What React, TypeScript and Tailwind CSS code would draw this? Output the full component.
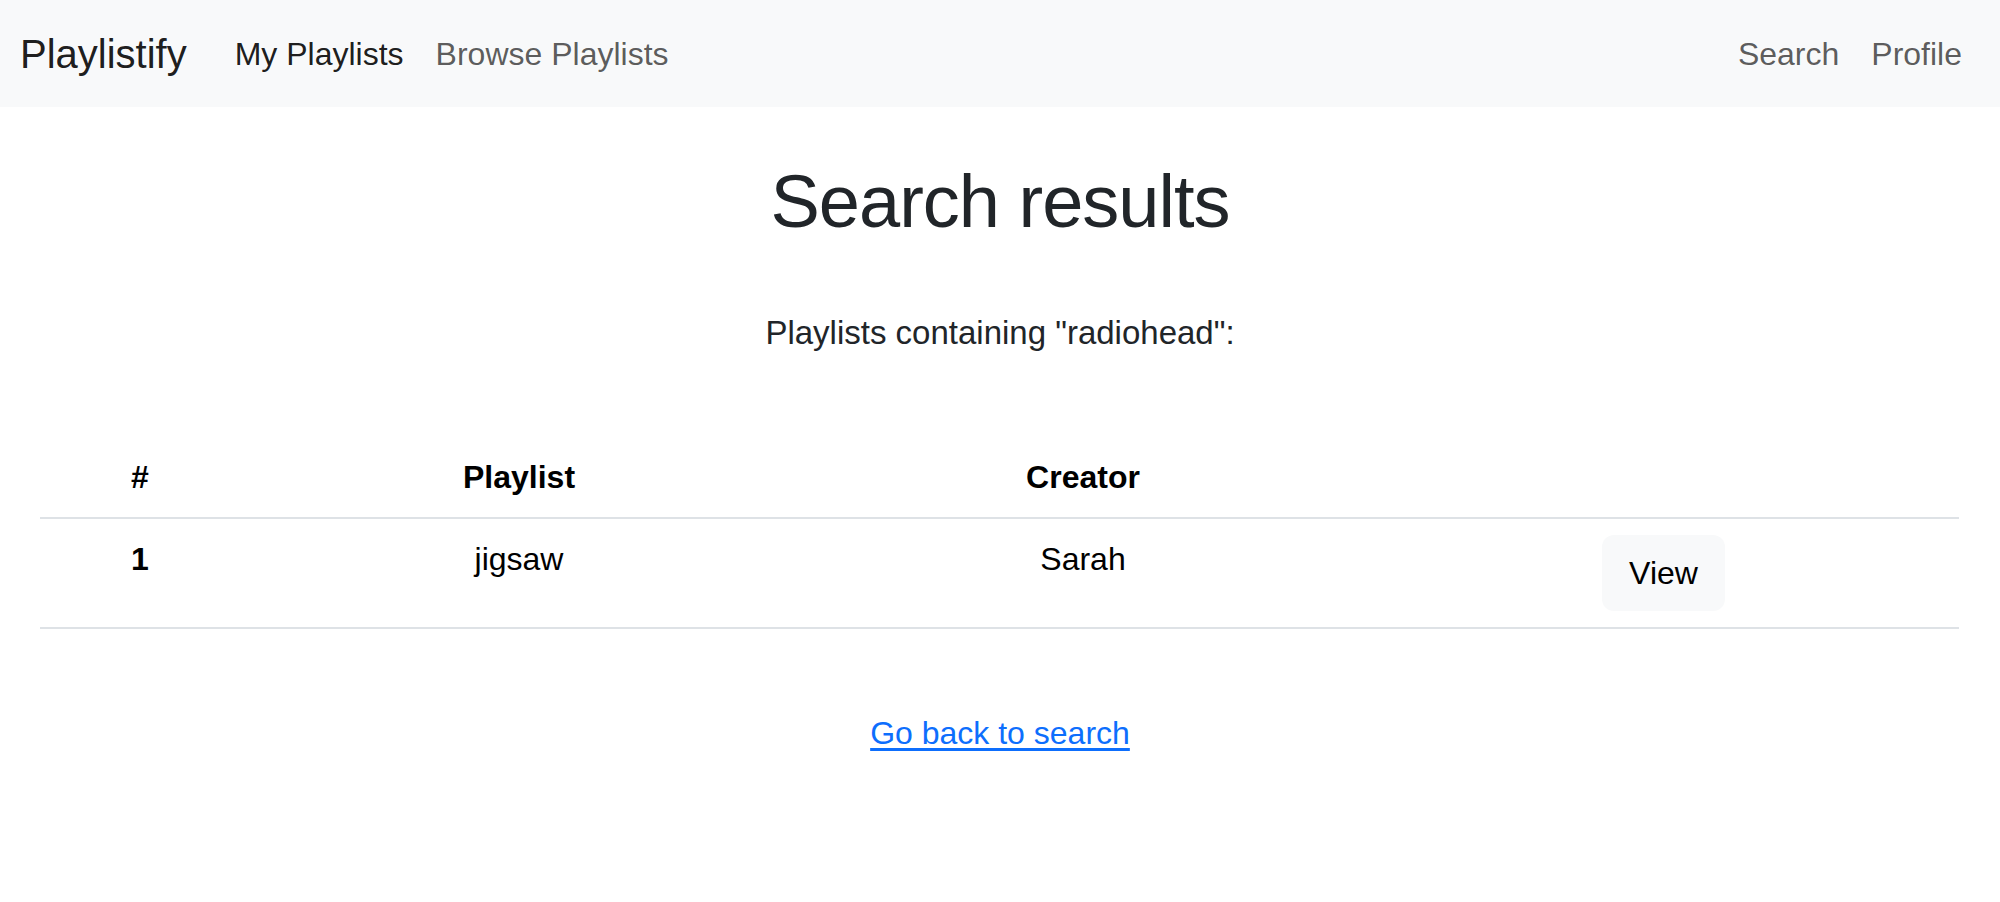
import React from 'react';

interface PlaylistResult {
    id: number;
    name: string;
    creator: string;
}

const RESULTS: PlaylistResult[] = [{ id: 1, name: 'jigsaw', creator: 'Sarah' }];

const Navbar: React.FC = () => (
    <nav className="h-[107px] bg-[#f8f9fa] flex items-center pl-5 pr-[22px]">
        <a href="#" className="text-[40px] leading-[60px] text-black/90 mr-8">Playlistify</a>
        <div className="flex">
            <a href="#" className="px-4 text-[32px] leading-[48px] text-black/90">My Playlists</a>
            <a href="#" className="px-4 text-[32px] leading-[48px] text-black/65">Browse Playlists</a>
        </div>
        <div className="flex ml-auto">
            <a href="#" className="px-4 text-[32px] leading-[48px] text-black/65">Search</a>
            <a href="#" className="px-4 text-[32px] leading-[48px] text-black/65">Profile</a>
        </div>
    </nav>
);

const App: React.FC = () => {
    const query = 'radiohead';

    return (
        <div className="min-h-screen bg-white font-['Liberation_Sans',Arial,sans-serif]">
            <Navbar />

            <main className="w-[1920px] mx-auto text-center">
                <h1 className="mt-[50px] text-[74px] leading-[89px] font-medium tracking-[-1px] text-[#212529]">Search results</h1>
                <p className="mt-[63px] text-[33px] leading-[48px] text-[#212529]">Playlists containing "{query}":</p>

                {/* Results table */}
                <table className="mt-20 w-[1919px] table-fixed border-collapse text-[32px] leading-[48px] text-black">
                    <colgroup>
                        <col className="w-[200px]" />
                        <col className="w-[558px]" />
                        <col className="w-[570px]" />
                        <col />
                    </colgroup>
                    <thead>
                        <tr className="border-b-2 border-[#dee2e6]">
                            <th className="p-4 font-bold">#</th>
                            <th className="p-4 font-bold">Playlist</th>
                            <th className="p-4 font-bold">Creator</th>
                            <th className="p-4"></th>
                        </tr>
                    </thead>
                    <tbody>
                        {RESULTS.map(r => (
                            <tr key={r.id} className="border-b-2 border-[#dee2e6]">
                                <td className="p-4 align-top font-bold">{r.id}</td>
                                <td className="p-4 align-top">{r.name}</td>
                                <td className="p-4 align-top">{r.creator}</td>
                                <td className="p-4 align-top">
                                    <button className="h-[76px] px-[27px] rounded-xl bg-[#f8f9fa] text-[32px] leading-[48px] text-black">View</button>
                                </td>
                            </tr>
                        ))}
                    </tbody>
                </table>

                <div className="mt-20">
                    <a href="#" className="text-[32px] leading-[48px] text-[#0d6efd] underline underline-offset-[4px]">Go back to search</a>
                </div>
            </main>
        </div>
    );
};

export default App;
